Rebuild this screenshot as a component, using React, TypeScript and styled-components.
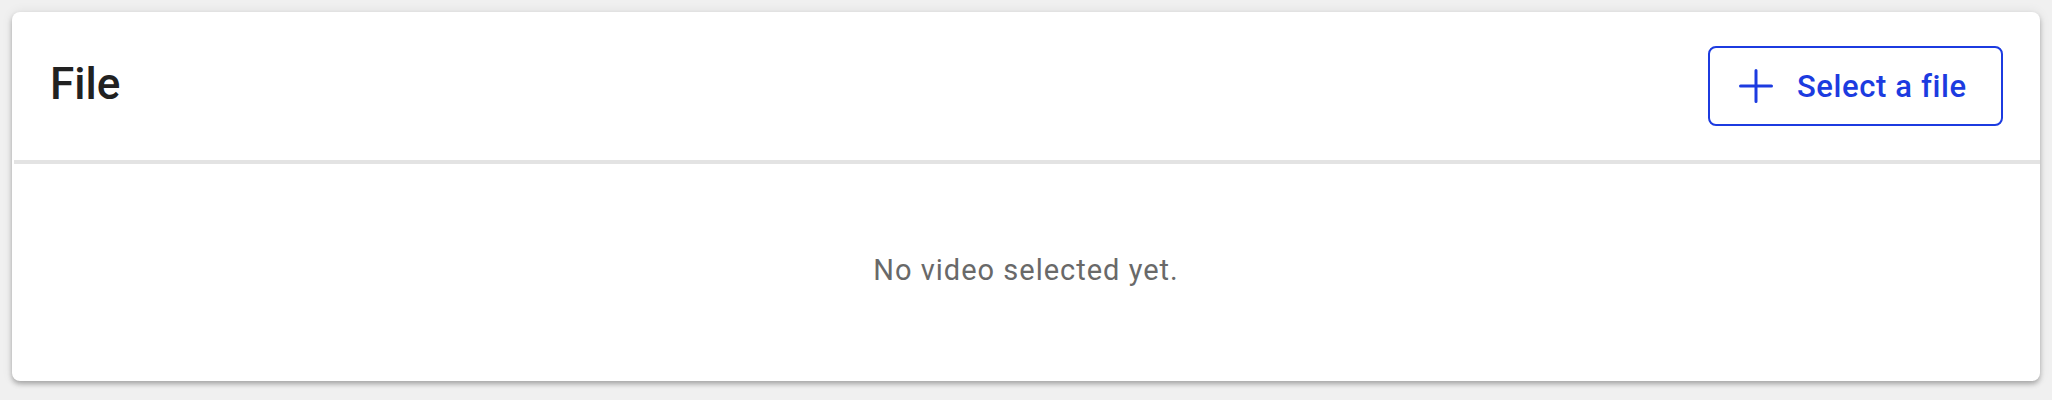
import React, { FC } from 'react';
import styled, { createGlobalStyle } from 'styled-components';

const GlobalStyle = createGlobalStyle`
	html, body {
		margin: 0;
		padding: 0;
		background: #f0f0f0;
		font-family: Roboto, "Liberation Sans", Arial, sans-serif;
	}
	#root {
		padding: 12px;
	}
`;

const Card = styled.section`
	background: #fff;
	border-radius: 8px;
	box-shadow: 0 3px 5px rgba(0, 0, 0, 0.28), 0 0 12px rgba(0, 0, 0, 0.08);
	display: flex;
	flex-direction: column;
	height: 369px;
	overflow: hidden;
`;

const Header = styled.header`
	align-items: center;
	box-sizing: border-box;
	display: flex;
	height: 148px;
	justify-content: space-between;
	padding: 0 37px 0 38px;
`;

const Title = styled.h2`
	color: #212121;
	font-size: 44px;
	font-weight: 500;
	margin: 0 0 4px;
`;

const OutlineButton = styled.button`
	align-items: center;
	background: #fff;
	border: 2px solid #1c3be0;
	border-radius: 8px;
	box-sizing: border-box;
	color: #1c3be0;
	cursor: pointer;
	display: flex;
	font-family: inherit;
	font-size: 31px;
	font-weight: 500;
	gap: 24px;
	height: 80px;
	letter-spacing: 0.6px;
	padding: 0 34px 0 29px;
	width: 295px;
`;

const Divider = styled.hr`
	background: #e3e3e3;
	border: 0;
	height: 4px;
	margin: 0 0 0 2px;
`;

const Body = styled.div`
	align-items: center;
	display: flex;
	flex: 1;
	justify-content: center;
	padding-bottom: 6px;
`;

const Empty = styled.p`
	color: #696969;
	font-size: 29px;
	letter-spacing: 1px;
	margin: 0;
`;

const PlusIcon: FC = () => (
	<svg width="34" height="34" viewBox="0 0 34 34" fill="none">
		<path d="M17 1.5v31M1.5 17h31" stroke="currentColor" strokeWidth="3" strokeLinecap="round" />
	</svg>
);

const App: FC = () => (
	<>
		<GlobalStyle />
		<Card>
			<Header>
				<Title>File</Title>
				<OutlineButton type="button">
					<PlusIcon />
					Select a file
				</OutlineButton>
			</Header>
			<Divider />
			<Body>
				<Empty>No video selected yet.</Empty>
			</Body>
		</Card>
	</>
);

export default App;
